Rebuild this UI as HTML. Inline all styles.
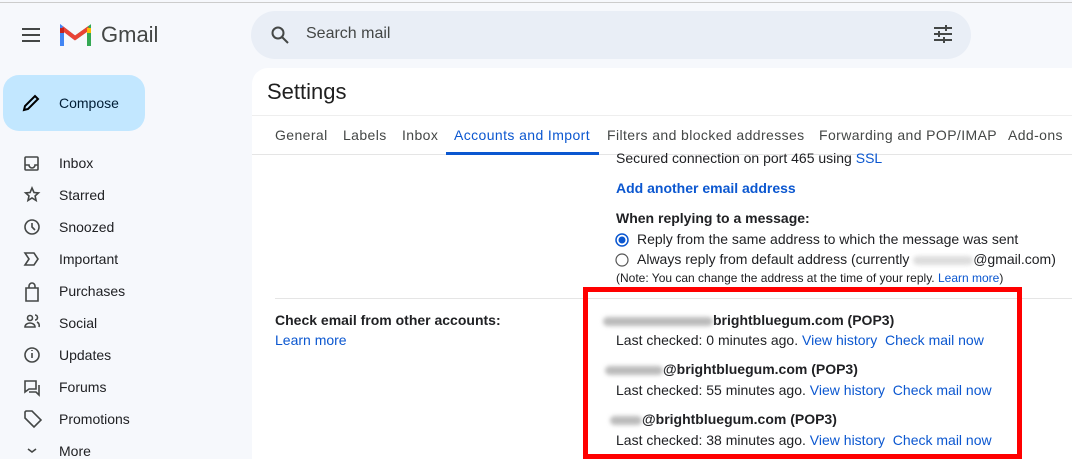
<!DOCTYPE html>
<html><head><meta charset="utf-8"><style>
*{margin:0;padding:0;box-sizing:border-box}
html,body{width:1072px;height:459px;overflow:hidden}
body{background:#f6f8fc;font-family:"Liberation Sans",Arial,sans-serif;color:#202124;position:relative}
.a{position:absolute;white-space:nowrap}
.nav{font-size:14px;color:#202124}
.tab{position:absolute;top:127px;font-size:14px;color:#444746;letter-spacing:0.4px}
.blue{color:#0b57d0}
.t{font-size:14px}
.blur{display:inline-block;height:9px;background:#bbb;border-radius:5px;filter:blur(2px);vertical-align:middle}
</style></head><body>
<div class="a" style="left:0;top:2px;width:1072px;height:1px;background:#ccc"></div>
<svg class="a" style="left:22px;top:28px" width="18" height="14"><path d="M0 1h18M0 7h18M0 13h18" stroke="#444746" stroke-width="2"/></svg>
<svg class="a" style="left:60px;top:24px" width="31" height="22" viewBox="0 0 31 22">
<path d="M2 22V4l13 10" fill="none" stroke="#4285f4" stroke-width="4"/>
<path d="M29 22V4L15 14" fill="none" stroke="#34a853" stroke-width="4"/>
<path d="M2 4l13 10L29 4" fill="none" stroke="#ea4335" stroke-width="4"/>
<path d="M29 4l0 5" stroke="#fbbc04" stroke-width="4"/>
<path d="M2 4l0 5" stroke="#c5221f" stroke-width="4"/>
</svg>
<div class="a" style="left:101px;top:22px;font-size:22px;color:#444746">Gmail</div>
<div class="a" style="left:251px;top:11px;width:720px;height:48px;border-radius:24px;background:#e9eef6"></div>
<svg class="a" style="left:270px;top:25px" width="20" height="20"><circle cx="8" cy="8" r="5.5" fill="none" stroke="#444746" stroke-width="2"/><path d="M12 12l6 6" stroke="#444746" stroke-width="2"/></svg>
<div class="a" style="left:306px;top:25px;font-size:16px;color:#444746">Search mail</div>
<svg class="a" style="left:933px;top:25px" width="20" height="18"><path d="M1 3h18M1 9h18M1 15h18" stroke="#444746" stroke-width="2"/><path d="M13 0v6M6 6v6M11 12v6" stroke="#444746" stroke-width="2"/></svg>
<div class="a" style="left:3px;top:75px;width:142px;height:56px;border-radius:16px;background:#c2e7ff"></div>
<svg class="a" style="left:22px;top:94px" width="18" height="18"><path d="M2 16l1-4L13 2l3 3L6 15z" fill="none" stroke="#000" stroke-width="2"/></svg>
<div class="a" style="left:59px;top:95px;font-size:14px;color:#001d35">Compose</div>
<div class="a nav" style="left:59px;top:155px">Inbox</div>
<div class="a nav" style="left:59px;top:187px">Starred</div>
<div class="a nav" style="left:59px;top:219px">Snoozed</div>
<div class="a nav" style="left:59px;top:251px">Important</div>
<div class="a nav" style="left:59px;top:283px">Purchases</div>
<div class="a nav" style="left:59px;top:315px">Social</div>
<div class="a nav" style="left:59px;top:347px">Updates</div>
<div class="a nav" style="left:59px;top:379px">Forums</div>
<div class="a nav" style="left:59px;top:411px">Promotions</div>
<div class="a nav" style="left:59px;top:443px">More</div>
<svg class="a" style="left:22px;top:154px" width="20" height="305" fill="none" stroke="#444746" stroke-width="1.6">
<rect x="3" y="3" width="13" height="13" rx="1"/><path d="M3 11h4a3 3 0 0 0 6 0h3"/>
<path d="M10 34l2 4.5 4.5.4-3.4 3 1 4.6L10 44l-4 2.5 1-4.6-3.4-3 4.5-.4z"/>
<circle cx="10" cy="73" r="7"/><path d="M10 69v4l3 3"/>
<path d="M3 99h9l4 6-4 6H3l4-6z"/>
<path d="M4 134h12v13H4zM7 134v-2a3 3 0 0 1 6 0v2"/>
<circle cx="8" cy="164" r="2.5"/><path d="M3 173a5 4 0 0 1 10 0zM13 161a2.5 2.5 0 0 1 0 5M15 168a4 4 0 0 1 2 5"/>
<circle cx="10" cy="201" r="7"/><path d="M10 199v5M10 196v1"/>
<path d="M3 227h11v8H7l-4 3zM17 231v10l-3-3H7"/>
<path d="M3 258v6l9 9 7-7-9-9h-6z"/>
<path d="M6 295l4 3 4-3"/>
</svg>
<div class="a" style="left:252px;top:68px;width:830px;height:400px;background:#fff;border-radius:16px 0 0 0"></div>
<div class="a" style="left:267px;top:79px;font-size:22px;color:#1f1f1f">Settings</div>
<div class="a" style="left:252px;top:115px;width:820px;height:1px;background:#eee"></div>
<div class="tab" style="left:275px">General</div>
<div class="tab" style="left:343px">Labels</div>
<div class="tab" style="left:402px">Inbox</div>
<div class="tab blue" style="left:454px">Accounts and Import</div>
<div class="tab" style="left:607px">Filters and blocked addresses</div>
<div class="tab" style="left:819px">Forwarding and POP/IMAP</div>
<div class="tab" style="left:1008px">Add-ons</div>
<div class="a" style="left:252px;top:154px;width:820px;height:1px;background:#e5e5e5"></div>
<div class="a" style="left:446px;top:152px;width:153px;height:3px;background:#0b57d0"></div>
<div class="a t" style="left:616px;top:150px">Secured connection on port 465 using <span class="blue">SSL</span></div>
<div class="a t blue" style="left:616px;top:180px;font-weight:bold">Add another email address</div>
<div class="a t" style="left:616px;top:210px;font-weight:bold">When replying to a message:</div>
<svg class="a" style="left:615px;top:233px" width="14" height="14"><circle cx="7" cy="7" r="6" fill="none" stroke="#0b57d0" stroke-width="1.5"/><circle cx="7" cy="7" r="3.5" fill="#0b57d0"/></svg>
<div class="a t" style="left:637px;top:231px">Reply from the same address to which the message was sent</div>
<svg class="a" style="left:615px;top:253px" width="14" height="14"><circle cx="7" cy="7" r="6" fill="none" stroke="#555" stroke-width="1.2"/></svg>
<div class="a t" style="left:637px;top:251px">Always reply from default address (currently <span class="blur" style="width:60px;background:#ddd"></span>@gmail.com)</div>
<div class="a" style="left:616px;top:271px;font-size:12px">(Note: You can change the address at the time of your reply. <span class="blue">Learn more</span>)</div>
<div class="a" style="left:275px;top:298px;width:797px;height:1px;background:#e5e5e5"></div>
<div class="a t" style="left:275px;top:312px;font-weight:bold">Check email from other accounts:</div>
<div class="a t blue" style="left:275px;top:332px">Learn more</div>
<div class="a t" style="left:603px;top:312px;font-weight:bold"><span class="blur" style="width:110px"></span>brightbluegum.com (POP3)</div>
<div class="a t" style="left:616px;top:332px">Last checked: 0 minutes ago. <span class="blue">View history</span>&nbsp; <span class="blue">Check mail now</span></div>
<div class="a t" style="left:605px;top:361px;font-weight:bold"><span class="blur" style="width:58px"></span>@brightbluegum.com (POP3)</div>
<div class="a t" style="left:616px;top:382px">Last checked: 55 minutes ago. <span class="blue">View history</span>&nbsp; <span class="blue">Check mail now</span></div>
<div class="a t" style="left:610px;top:411px;font-weight:bold"><span class="blur" style="width:32px"></span>@brightbluegum.com (POP3)</div>
<div class="a t" style="left:616px;top:432px">Last checked: 38 minutes ago. <span class="blue">View history</span>&nbsp; <span class="blue">Check mail now</span></div>
<div class="a" style="left:583px;top:287px;width:439px;height:172px;border:5px solid #f00"></div>
</body></html>
